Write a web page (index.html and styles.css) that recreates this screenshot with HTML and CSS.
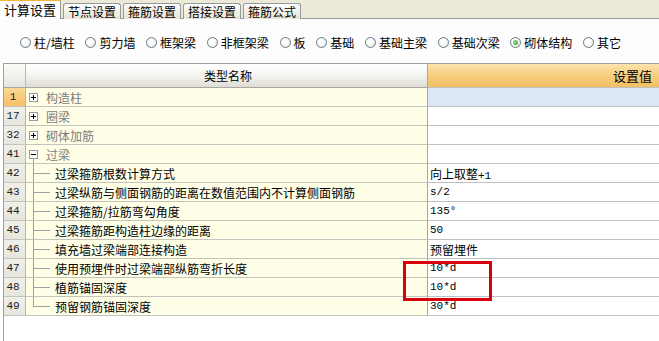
FILE: index.html
```html
<!DOCTYPE html>
<html lang="zh">
<head>
<meta charset="utf-8">
<title>计算设置</title>
<link rel="stylesheet" href="styles.css">
</head>
<body>
<div class="tabs">
  <div class="tab active">计算设置</div>
  <div class="tab">节点设置</div>
  <div class="tab">箍筋设置</div>
  <div class="tab">搭接设置</div>
  <div class="tab">箍筋公式</div>
</div>
<div class="radios">
  <label class="radio"><span class="circle"></span>柱/墙柱</label>
  <label class="radio"><span class="circle"></span>剪力墙</label>
  <label class="radio"><span class="circle"></span>框架梁</label>
  <label class="radio"><span class="circle"></span>非框架梁</label>
  <label class="radio"><span class="circle"></span>板</label>
  <label class="radio"><span class="circle"></span>基础</label>
  <label class="radio"><span class="circle"></span>基础主梁</label>
  <label class="radio"><span class="circle"></span>基础次梁</label>
  <label class="radio"><span class="circle checked"></span>砌体结构</label>
  <label class="radio"><span class="circle"></span>其它</label>
</div>
<div class="grid">
  <div class="row head">
    <div class="num"></div>
    <div class="name">类型名称</div>
    <div class="val">设置值</div>
  </div>
  <div class="row sel">
    <div class="num">1</div>
    <div class="name group"><span class="box plus"></span>构造柱</div>
    <div class="val"></div>
  </div>
  <div class="row">
    <div class="num">17</div>
    <div class="name group"><span class="box plus"></span>圈梁</div>
    <div class="val"></div>
  </div>
  <div class="row">
    <div class="num">32</div>
    <div class="name group"><span class="box plus"></span>砌体加筋</div>
    <div class="val"></div>
  </div>
  <div class="row">
    <div class="num">41</div>
    <div class="name group open"><span class="box minus"></span>过梁</div>
    <div class="val"></div>
  </div>
  <div class="row">
    <div class="num">42</div>
    <div class="name"><span class="branch"></span>过梁箍筋根数计算方式</div>
    <div class="val"><span>向上取整<span class="m">+1</span></span></div>
  </div>
  <div class="row">
    <div class="num">43</div>
    <div class="name"><span class="branch"></span>过梁纵筋与侧面钢筋的距离在数值范围内不计算侧面钢筋</div>
    <div class="val"><span class="m">s/2</span></div>
  </div>
  <div class="row">
    <div class="num">44</div>
    <div class="name"><span class="branch"></span>过梁箍筋/拉筋弯勾角度</div>
    <div class="val"><span class="m">135°</span></div>
  </div>
  <div class="row">
    <div class="num">45</div>
    <div class="name"><span class="branch"></span>过梁箍筋距构造柱边缘的距离</div>
    <div class="val"><span class="m">50</span></div>
  </div>
  <div class="row">
    <div class="num">46</div>
    <div class="name"><span class="branch"></span>填充墙过梁端部连接构造</div>
    <div class="val">预留埋件</div>
  </div>
  <div class="row">
    <div class="num">47</div>
    <div class="name"><span class="branch"></span>使用预埋件时过梁端部纵筋弯折长度</div>
    <div class="val"><span class="m">10*d</span></div>
  </div>
  <div class="row">
    <div class="num">48</div>
    <div class="name"><span class="branch"></span>植筋锚固深度</div>
    <div class="val"><span class="m">10*d</span></div>
  </div>
  <div class="row">
    <div class="num">49</div>
    <div class="name"><span class="branch last"></span>预留钢筋锚固深度</div>
    <div class="val"><span class="m">30*d</span></div>
  </div>
  <div class="highlight"></div>
</div>
</body>
</html>
```
FILE: styles.css
```css
* { box-sizing: border-box; }
html, body { margin: 0; padding: 0; }
body {
  width: 659px;
  height: 341px;
  overflow: hidden;
  display: flex;
  flex-direction: column;
  background: #ffffff;
  font-family: "Noto Sans CJK SC", "Liberation Sans", sans-serif;
  font-size: 12px;
  color: #000;
}

/* tabs */
.tabs {
  height: 19px;
  flex: none;
  display: flex;
  align-items: flex-end;
  gap: 2px;
  background: #ece9d8;
  border-bottom: 1px solid #919b9c;
}
.tab {
  height: 16px;
  width: 58px;
  margin-bottom: -1px;
  display: flex;
  align-items: center;
  justify-content: center;
  border: 1px solid #919b9c;
  border-bottom: none;
  border-radius: 3px 3px 0 0;
  background: linear-gradient(#fefefe, #f0efe6 60%, #e6e4d8);
  font-size: 12px;
  line-height: 1;
}
.tab.active {
  height: 20px;
  width: 61px;
  border: none;
  border-top: 2px solid #f5b53a;
  border-right: 1px solid #919b9c;
  border-radius: 0;
  background: #ffffff;
  font-size: 13px;
  padding-bottom: 1px;
}

/* radio row */
.radios {
  height: 44px;
  flex: none;
  display: flex;
  align-items: center;
  gap: 10.7px;
  padding-left: 20px;
  padding-top: 3px;
  background: #fdfdfd;
}
.radio {
  display: flex;
  align-items: center;
  gap: 3px;
  line-height: 1;
  white-space: nowrap;
}
.circle {
  width: 11px;
  height: 11px;
  border-radius: 50%;
  border: 1px solid #6a7b8c;
  background: radial-gradient(circle at 40% 40%, #ffffff 30%, #dcdcd4 100%);
  display: flex;
  align-items: center;
  justify-content: center;
}
.circle.checked::after {
  content: "";
  width: 5px;
  height: 5px;
  border-radius: 50%;
  background: radial-gradient(circle at 40% 40%, #8ee08e, #2a9a2a);
}

/* grid */
.grid {
  position: relative;
  flex: 1;
  margin-left: 3px;
  border-left: 1px solid #a0a0a0;
  border-top: 1px solid #a0a0a0;
}
.row {
  display: grid;
  grid-template-columns: 22px 402px 1fr;
  height: 19px;
}
.row > div {
  display: flex;
  align-items: center;
  border-bottom: 1px solid #c4c4bc;
  white-space: nowrap;
  overflow: hidden;
}
.num {
  justify-content: center;
  padding-right: 3px;
  border-right: 1px solid #b8b8b0;
  background: linear-gradient(#f0f0ea, #e6e6de);
  font-family: "Liberation Mono", monospace;
  font-size: 11px;
  color: #202020;
}
.name {
  background: #ffffe8;
  border-right: 1px solid #a8a8a0;
  padding-left: 3px;
}
.val {
  background: #ffffff;
  padding-left: 2px;
  border-bottom-color: #c0c0c0 !important;
}
.m {
  font-family: "Liberation Mono", monospace;
  font-size: 11px;
}

.row.head { height: 24px; }
.row.head > div { border-bottom: 1px solid #a8a8a0; }
.row.head .num { background: linear-gradient(#fbfbf9, #e6e6e0); }
.row.head .name {
  justify-content: center;
  background: linear-gradient(#ffffff, #f4f4f0 50%, #dedcd4);
  font-size: 12px;
}
.row.head .val {
  justify-content: flex-end;
  padding-right: 7px;
  background: linear-gradient(#fde4ae, #f7cd7e 50%, #f2c063);
  font-size: 13px;
}

.row.sel .num { background: linear-gradient(#fbd891, #f6c06a); }
.row.sel .val { background: #dde6f5; }

.group { color: #7c7c7c; }
.box {
  position: relative;
  flex: none;
  width: 9px;
  height: 9px;
  margin-right: 8px;
  border: 1px solid #9a9a9a;
  background: #ffffff;
}
.box::before {
  content: "";
  position: absolute;
  left: 1px;
  top: 3px;
  width: 5px;
  height: 1px;
  background: #000;
}
.box.plus::after {
  content: "";
  position: absolute;
  left: 3px;
  top: 1px;
  width: 1px;
  height: 5px;
  background: #000;
}
.group.open {
  background-image: linear-gradient(#a0a0a0, #a0a0a0);
  background-size: 1px 5px;
  background-position: 7px 100%;
  background-repeat: no-repeat;
  background-color: #ffffe8;
}
.branch {
  flex: none;
  align-self: stretch;
  width: 17px;
  margin-left: 4px;
  margin-right: 5px;
  margin-bottom: -1px;
  background-image:
    linear-gradient(#a0a0a0, #a0a0a0),
    linear-gradient(#a0a0a0, #a0a0a0);
  background-size: 1px 100%, 100% 1px;
  background-position: 0 0, 0 9px;
  background-repeat: no-repeat;
}
.branch.last {
  background-size: 1px 10px, 100% 1px;
}

.highlight {
  position: absolute;
  left: 399px;
  top: 197px;
  width: 89px;
  height: 40px;
  border: 3px solid #d8000c;
  pointer-events: none;
}
```
